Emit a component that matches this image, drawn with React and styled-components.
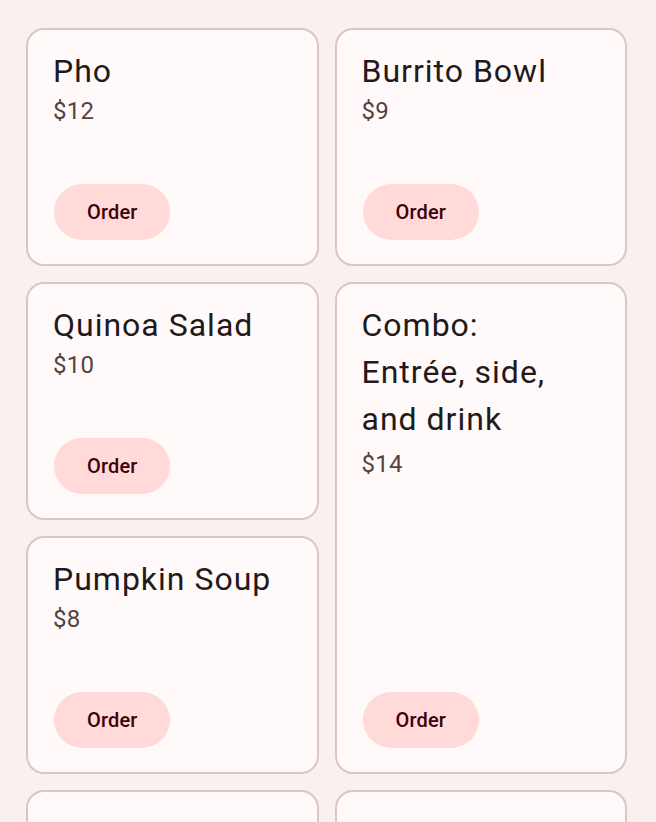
import React from 'react';
import styled, { createGlobalStyle } from 'styled-components';

const GlobalStyle = createGlobalStyle`
  html, body {
    margin: 0;
    padding: 0;
    background: #faf0ef;
  }
  body {
    font-family: Roboto, "Noto Sans", "Liberation Sans", sans-serif;
  }
`;

const Screen = styled.div`
  height: 100vh;
  overflow-y: auto;
  scrollbar-width: none;
  box-sizing: border-box;
  padding: 28px 29px 28px 26px;
  background: #faf0ef;

  &::-webkit-scrollbar {
    display: none;
  }
`;

const Grid = styled.div`
  display: grid;
  grid-template-columns: 1fr 1fr;
  grid-auto-rows: 238px;
  gap: 16px;
`;

const Card = styled.div`
  grid-row: span ${(p) => p.$rows || 1};
  display: flex;
  flex-direction: column;
  align-items: flex-start;
  box-sizing: border-box;
  padding: 18px 40px 24px 25px;
  background: #fffaf9;
  border: 2px solid #dcc6c4;
  border-radius: 18px;
`;

const Title = styled.div`
  font-size: 32px;
  line-height: 47px;
  letter-spacing: 1px;
  color: #231919;
`;

const Price = styled.div`
  margin-top: ${(p) => (p.$tall ? '5px' : '0')};
  font-size: 24px;
  line-height: 32px;
  letter-spacing: 0.2px;
  color: #534341;
`;

const OrderButton = styled.button`
  margin-top: auto;
  margin-left: 1px;
  height: 56px;
  padding: 0 33px;
  border: none;
  border-radius: 28px;
  background: #ffdad9;
  color: #410008;
  font-family: inherit;
  font-size: 20px;
  font-weight: 500;
  letter-spacing: 0.15px;
  cursor: pointer;
`;

const items = [
  { name: 'Pho', price: 12 },
  { name: 'Burrito Bowl', price: 9 },
  { name: 'Quinoa Salad', price: 10 },
  { name: 'Combo: Entrée, side, and drink', price: 14, rows: 2 },
  { name: 'Pumpkin Soup', price: 8 },
  { name: 'Ramen', price: 11 },
  { name: 'Tacos', price: 7 },
];

const MenuCard = ({ item }) => (
  <Card $rows={item.rows}>
    <Title>{item.name}</Title>
    <Price $tall={item.rows > 1}>${item.price}</Price>
    <OrderButton>Order</OrderButton>
  </Card>
);

export default function App() {
  return (
    <>
      <GlobalStyle />
      <Screen>
        <Grid>
          {items.map((item) => (
            <MenuCard key={item.name} item={item} />
          ))}
        </Grid>
      </Screen>
    </>
  );
}
